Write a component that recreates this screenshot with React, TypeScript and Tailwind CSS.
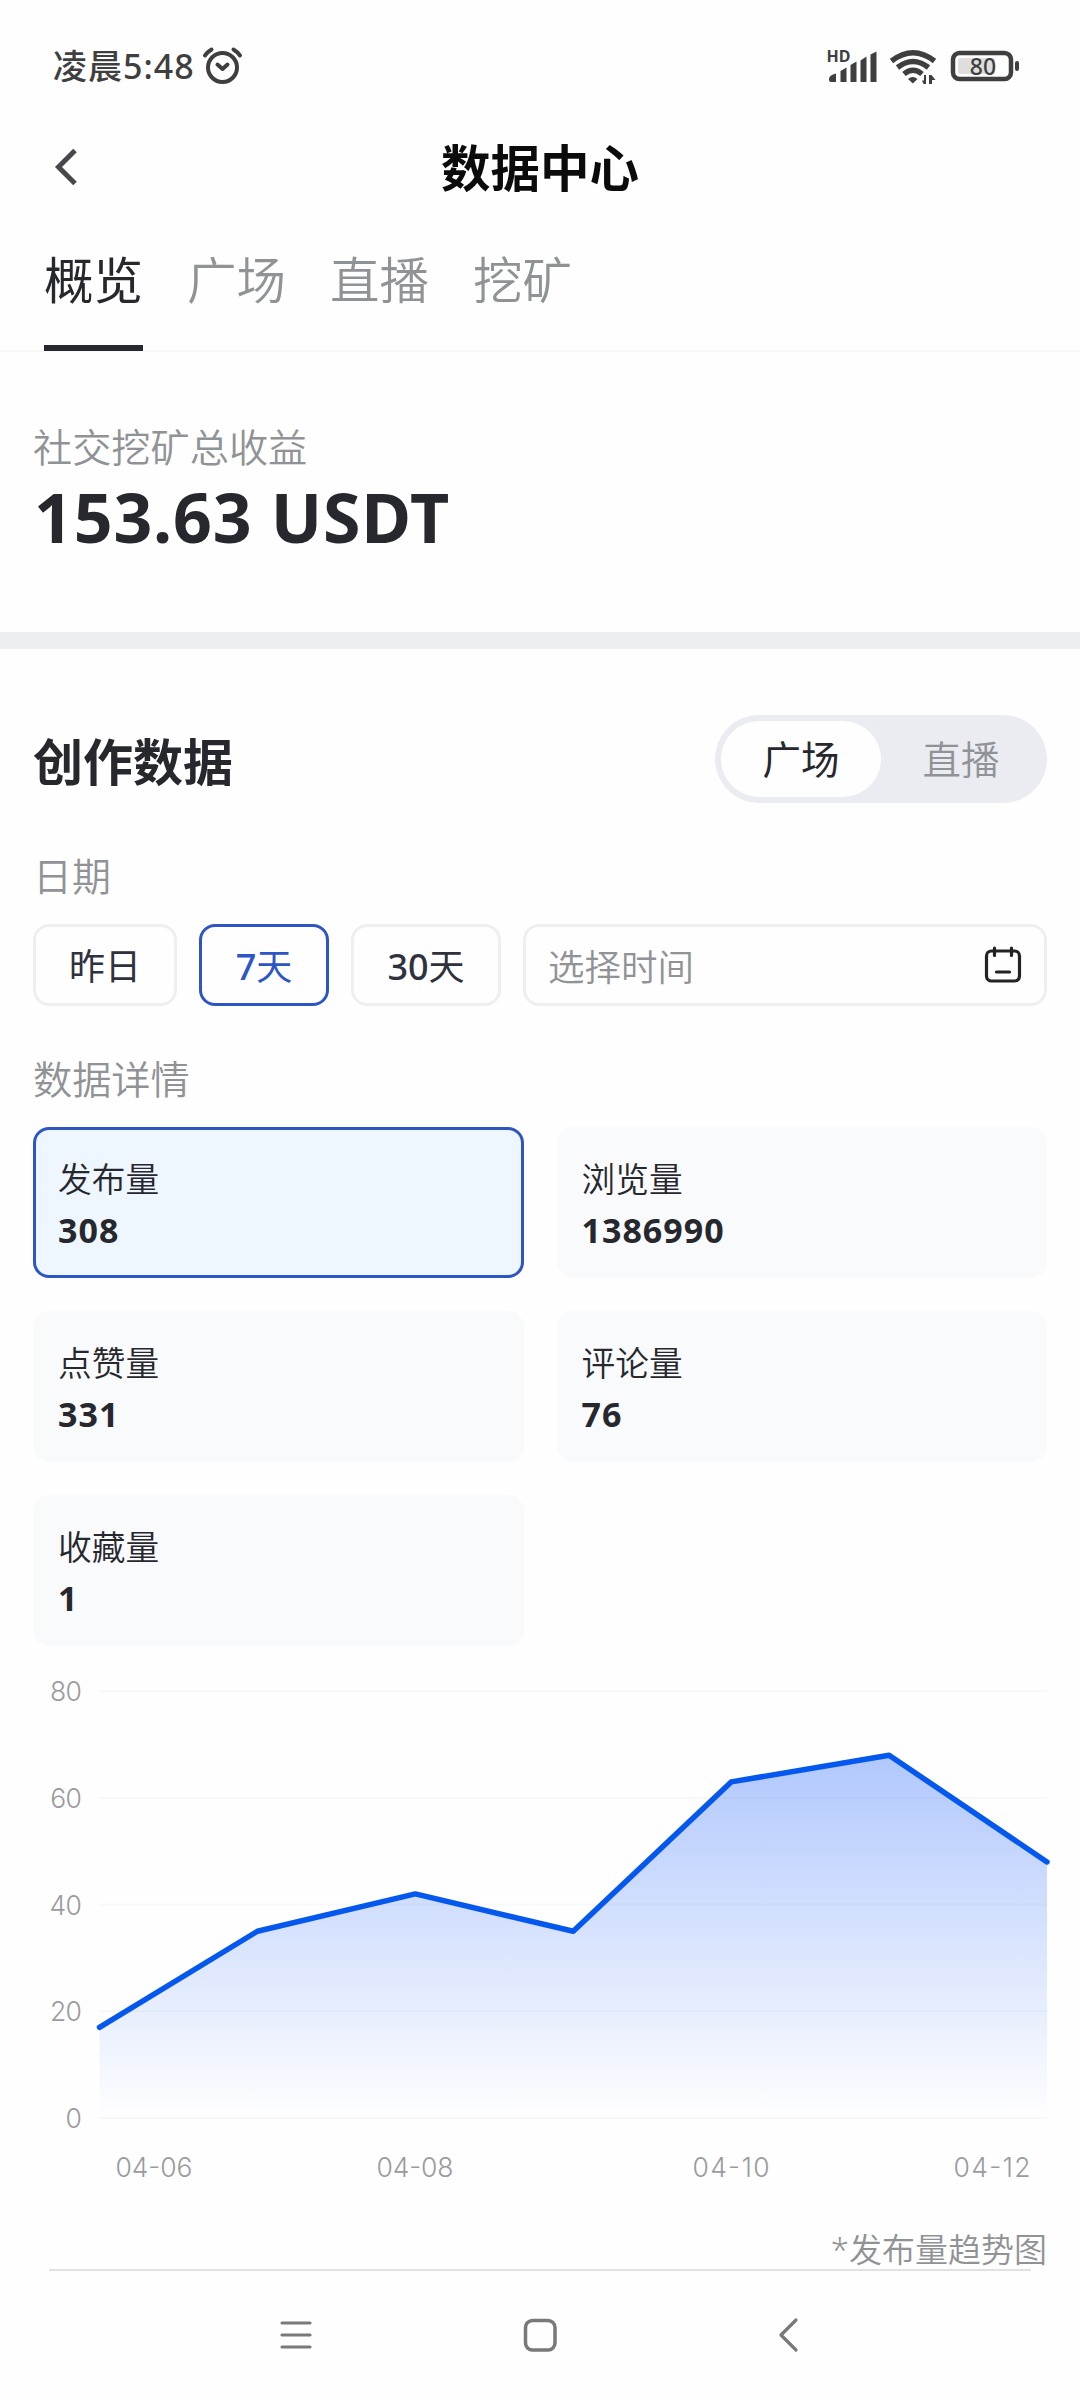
import React, { useState } from 'react';

const TABS = ['概览', '广场', '直播', '挖矿'];
const RANGES = [
  { id: 'yesterday', label: '昨日', width: 'w-[144px]' },
  { id: '7d', label: '7天', width: 'w-[130px]' },
  { id: '30d', label: '30天', width: 'w-[150px]' },
];
const METRICS = [
  { name: '发布量', value: 308 },
  { name: '浏览量', value: 1386990 },
  { name: '点赞量', value: 331 },
  { name: '评论量', value: 76 },
  { name: '收藏量', value: 1 },
];
const TREND = [17, 35, 42, 35, 63, 68, 48];
const Y_TICKS = [80, 60, 40, 20, 0];
const X_LABELS = [
  { text: '04-06', x: 154 },
  { text: '04-08', x: 415 },
  { text: '04-10', x: 731 },
  { text: '04-12', x: 992 },
];

const StatusBar: React.FC = () => (
  <div className="h-[132px] pl-[53px] pr-[60px] flex items-center justify-between text-[#3f3f40]">
    <div className="flex items-center">
      <span className="text-[34px] leading-[40px] font-medium tracking-[1px]">凌晨5:48</span>
      <svg className="ml-[6px]" width="44" height="40" viewBox="0 0 44 40" fill="none" stroke="currentColor" strokeLinecap="round">
        <circle cx="21.5" cy="21.5" r="14.5" strokeWidth="4" />
        <path d="M16.500 18.500l5 4.500 5-4.500" strokeWidth="4" strokeLinejoin="round" />
        <path d="M4 9.5c1.500-2 4-4.500 6.500-6M39 9.500c-1.500-2-4-4.500-6.500-6" strokeWidth="4" />
      </svg>
    </div>
    <svg width="196" height="40" viewBox="824 46 196 40" fill="currentColor">
      <text x="826.5" y="62" fontSize="16" fontWeight="700" fontFamily="'Noto Sans', sans-serif" textLength="24">HD</text>
      <path d="M829 79q0-4 7-5.500v8.500h-5q-2 0-2-2zM840.500 71l6-3.500v14.500h-6zM850.500 65l6-3.500v20.500h-6zM860.500 60.500l6-4v25.500h-6zM870.500 54.500l6-3v30.500h-6z" />
      <g fill="none" stroke="currentColor" strokeWidth="5.500">
        <path d="M891.500 61q21.500-16.500 43 0" />
        <path d="M897.500 67.500q15.500-12 31 0" />
        <path d="M904 74q9-7.500 18 0" />
      </g>
      <path d="M908 79q4.700-4 9.500 0l-4.700 4.500zM926 75v9h-2.500l-1.500-3.500h2v-5.500zM929 84v-9h2.500l4 5h-3.500v4z" />
      <rect x="953" y="53" width="58" height="26" rx="6.500" fill="none" stroke="currentColor" strokeWidth="4.500" />
      <rect x="958" y="58" width="37" height="16" rx="2" fill="#dedede" />
      <rect x="1015" y="61" width="4" height="10" rx="2" />
      <text x="983" y="75" fontSize="23" textAnchor="middle" fontFamily="'Noto Sans', sans-serif" fontWeight="500">80</text>
    </svg>
  </div>
);

const TrendChart: React.FC = () => {
  const left = 99.5;
  const right = 1047;
  const base = 449;
  const unit = 5.335;
  const points = TREND.map((v, i) => [left + (i * (right - left)) / (TREND.length - 1), base - v * unit]);
  const line = points.map(([x, y]) => `${x},${y}`).join(' ');

  return (
    <svg className="block" width="1080" height="540" viewBox="0 0 1080 540" fontFamily="Inter, sans-serif" fontSize="26.5" fontWeight="350" fill="#999b9e">
      <defs>
        <linearGradient id="area" gradientUnits="userSpaceOnUse" x1="0" y1="86" x2="0" y2="449">
          <stop offset="0" stopColor="#b1c8fd" />
          <stop offset="1" stopColor="#fefefe" />
        </linearGradient>
      </defs>
      <polygon points={`${left},${base} ${line} ${right},${base}`} fill="url(#area)" />
      {Y_TICKS.map((tick) => (
        <g key={tick}>
          <line x1={left} x2={right} y1={base - tick * unit} y2={base - tick * unit} stroke="#30304a" strokeOpacity="0.03" strokeWidth="2" />
          <text x="81" y={base - tick * unit + 10} textAnchor="end" letterSpacing="-0.8">{tick}</text>
        </g>
      ))}
      <polyline points={line} fill="none" stroke="#0558ee" strokeWidth="5.500" strokeLinecap="round" strokeLinejoin="round" />
      {X_LABELS.map((label) => (
        <text key={label.text} x={label.x} y="508" textAnchor="middle" textLength="77">{label.text}</text>
      ))}
    </svg>
  );
};

const App: React.FC = () => {
  const [activeTab, setActiveTab] = useState('概览');
  const [source, setSource] = useState('广场');
  const [range, setRange] = useState('7d');
  const [metric, setMetric] = useState('发布量');

  return (
    <div className="w-[1080px] h-[2400px] overflow-hidden bg-[#fefefe] text-[#26282e] font-['Noto_Sans','Noto_Sans_CJK_SC',sans-serif] flex flex-col">
      <StatusBar />

      {/* Page header */}
      <header className="h-[70px] px-[54px] grid grid-cols-[1fr_auto_1fr] items-center">
        <svg width="24" height="38" viewBox="0 0 24 38" fill="none" stroke="#48484c" strokeWidth="5">
          <path d="M21 1.500L4.500 18 21 34.500" />
        </svg>
        <h1 className="text-[49.500px] leading-[70px] pt-px font-bold text-[#0b0b0c]">数据中心</h1>
      </header>

      {/* Section tabs */}
      <nav className="h-[150px] pl-[44px] flex gap-[44px] border-b-2 border-[#f7f7f8]">
        {TABS.map((tab) => (
          <button
            key={tab}
            onClick={() => setActiveTab(tab)}
            className={`h-[149px] w-[99px] text-[49.500px] leading-[70px] pt-[43px] whitespace-nowrap flex flex-col justify-between ${
              activeTab === tab ? 'text-[#26282e]' : 'text-[#909396] font-[350]'
            }`}
          >
            {tab}
            {activeTab === tab && <span className="w-full h-[6px] bg-[#26282e]" />}
          </button>
        ))}
      </nav>

      <section className="h-[280px] pl-[33px] pt-[67px]">
        <div className="text-[39.200px] leading-[56px] font-[350] text-[#909396]">社交挖矿总收益</div>
        <div className="text-[68px] leading-[84px] pl-px font-bold tracking-[0.8px]">153.63 USDT</div>
      </section>
      <div className="h-[17px] bg-[#eceef1]" />

      <section className="px-[33px] pt-[66px]">
        <div className="h-[88px] flex items-center justify-between">
          <h2 className="text-[50px] leading-[70px] pt-[6px] font-bold">创作数据</h2>
          <div className="w-[332px] h-[88px] p-[6px] rounded-full bg-[#ebecf2] flex">
            {['广场', '直播'].map((item) => (
              <button
                key={item}
                onClick={() => setSource(item)}
                className={`flex-1 rounded-full text-[38.500px] leading-[70px] ${
                  source === item ? 'bg-[#fefefe]' : 'text-[#909396] font-[350]'
                }`}
              >
                {item}
              </button>
            ))}
          </div>
        </div>

        <div className="mt-[45px] text-[39px] leading-[56px] font-[350] text-[#909396]">日期</div>
        <div className="mt-[20px] h-[82px] flex gap-[22px]">
          {RANGES.map((item) => (
            <button
              key={item.id}
              onClick={() => setRange(item.id)}
              className={`${item.width} rounded-2xl text-[36px] leading-[74px] pt-[3px] border-[3px] ${
                range === item.id ? 'border-[#2d55c4] text-[#2d55c4]' : 'border-[#efeff1] text-[#2f313d]'
              }`}
            >
              {/\d/.test(item.label) ? (
                <>
                  <span className="font-medium">{parseInt(item.label, 10)}</span>天
                </>
              ) : (
                item.label
              )}
            </button>
          ))}
          <button className="flex-1 rounded-2xl border-[3px] border-[#efeff1] px-[22px] flex items-center justify-between">
            <span className="text-[36.500px] leading-[74px] pt-[3px] font-[350] text-[#909396]">选择时间</span>
            <svg width="38" height="38" viewBox="0 0 38 38" fill="none" stroke="#222327" strokeWidth="3.200" strokeLinecap="round">
              <rect x="2.500" y="5" width="33" height="30" rx="5" />
              <path d="M10.500 2v7.500M27.500 2v7.500M12.500 26h13" />
            </svg>
          </button>
        </div>

        <div className="mt-[45px] text-[39.200px] leading-[56px] font-[350] text-[#909396]">数据详情</div>
        <div className="mt-[20px] grid grid-cols-2 gap-[33px]">
          {METRICS.map((item) => (
            <button
              key={item.name}
              onClick={() => setMetric(item.name)}
              className={`h-[151px] rounded-2xl px-[22px] pt-[25px] border-[3px] flex flex-col items-start ${
                metric === item.name ? 'border-[#2d55c4] bg-[#eef6ff]' : 'border-[#f9fafc] bg-[#f9fafc]'
              }`}
            >
              <span className="text-[33.700px] leading-[48px] font-[350]">{item.name}</span>
              <span className="text-[34px] leading-[54px] font-bold tracking-[1px]">{item.value}</span>
            </button>
          ))}
        </div>
      </section>

      <div className="mt-[23px]">
        <TrendChart />
      </div>
      <div className="pr-[33px] h-[60px] text-right text-[33px] leading-[82px] font-[350] text-[#909396]">*{metric}趋势图</div>

      {/* System navigation */}
      <div className="mx-[49px] h-[2px] shrink-0 bg-[#e1e1e1]" />
      <div className="flex-1 flex pt-[46px]">
        <svg width="1080" height="36" viewBox="0 0 1080 36" fill="none" stroke="#797979" strokeWidth="3.200" strokeLinecap="round">
          <path d="M282 6h28M282 18h28M282 30h28" />
          <rect x="525.500" y="3.500" width="29.500" height="29.500" rx="7" strokeWidth="3.500" />
          <path d="M796 3L781 18l15 15" strokeLinejoin="round" />
        </svg>
      </div>
    </div>
  );
};

export default App;
